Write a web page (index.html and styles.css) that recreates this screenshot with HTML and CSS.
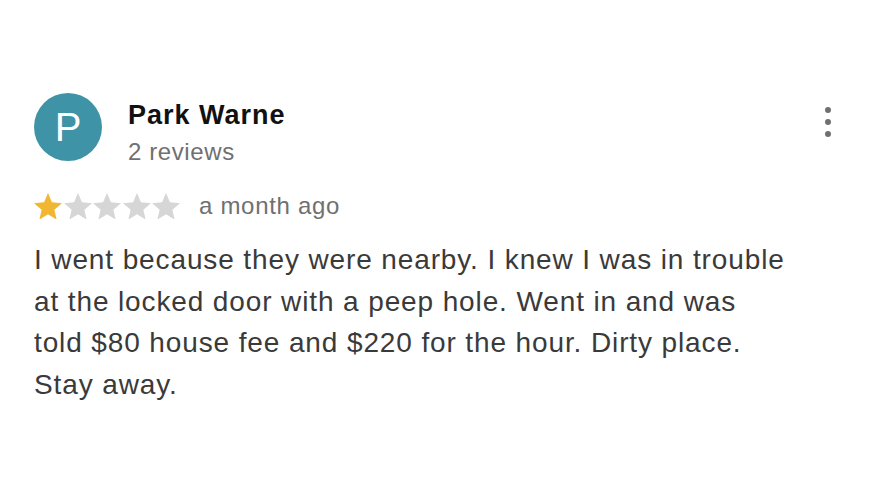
FILE: index.html
```html
<!DOCTYPE html>
<html>
<head>
<meta charset="utf-8">
<link rel="stylesheet" href="styles.css">
</head>
<body>
<div class="review">
  <div class="header">
    <div class="avatar">P</div>
    <div class="who">
      <div class="name">Park Warne</div>
      <div class="count">2 reviews</div>
    </div>
    <div class="menu" aria-label="More options">
      <span class="dot"></span><span class="dot"></span><span class="dot"></span>
    </div>
  </div>
  <div class="meta">
    <div class="stars">
      <svg class="star on" viewBox="2 2 20 19"><path d="M12 17.27L18.18 21l-1.64-7.03L22 9.24l-7.19-.61L12 2 9.19 8.63 2 9.24l5.46 4.73L5.82 21z"/></svg>
      <svg class="star" viewBox="2 2 20 19"><path d="M12 17.27L18.18 21l-1.64-7.03L22 9.24l-7.19-.61L12 2 9.19 8.63 2 9.24l5.46 4.73L5.82 21z"/></svg>
      <svg class="star" viewBox="2 2 20 19"><path d="M12 17.27L18.18 21l-1.64-7.03L22 9.24l-7.19-.61L12 2 9.19 8.63 2 9.24l5.46 4.73L5.82 21z"/></svg>
      <svg class="star" viewBox="2 2 20 19"><path d="M12 17.27L18.18 21l-1.64-7.03L22 9.24l-7.19-.61L12 2 9.19 8.63 2 9.24l5.46 4.73L5.82 21z"/></svg>
      <svg class="star" viewBox="2 2 20 19"><path d="M12 17.27L18.18 21l-1.64-7.03L22 9.24l-7.19-.61L12 2 9.19 8.63 2 9.24l5.46 4.73L5.82 21z"/></svg>
    </div>
    <span class="when">a month ago</span>
  </div>
  <p class="text">I went because they were nearby. I knew I was in trouble at the locked door with a peep hole. Went in and was told $80 house fee and $220 for the hour. Dirty place. Stay away.</p>
</div>
</body>
</html>
```
FILE: styles.css
```css
html, body {
  margin: 0;
  padding: 0;
  background: #ffffff;
}
body {
  font-family: "Liberation Sans", Arial, sans-serif;
  width: 880px;
  height: 493px;
  overflow: hidden;
}
.review {
  padding: 93px 0 0 34px;
}
.header {
  display: flex;
  align-items: flex-start;
}
.avatar {
  width: 68px;
  height: 68px;
  border-radius: 50%;
  background: #3f93a6;
  color: #ffffff;
  font-size: 40px;
  font-weight: 300;
  display: flex;
  align-items: center;
  justify-content: center;
  flex: none;
}
.who {
  margin-left: 26px;
  padding-top: 7px;
  flex: 1;
}
.name {
  font-size: 27px;
  font-weight: 600;
  letter-spacing: 1px;
  color: #111111;
  line-height: 30px;
}
.count {
  font-size: 24px;
  letter-spacing: 0.6px;
  color: #707070;
  line-height: 30px;
  margin-top: 7px;
}
.menu {
  width: 12px;
  margin-right: 46px;
  margin-top: 14px;
  display: flex;
  flex-direction: column;
  align-items: center;
  gap: 6px;
}
.dot {
  width: 6px;
  height: 6px;
  border-radius: 50%;
  background: #707070;
}
.meta {
  display: flex;
  align-items: center;
  margin-top: 24px;
  height: 30px;
}
.stars {
  display: flex;
  gap: 1.5px;
}
.star {
  width: 28px;
  height: 26.6px;
  fill: #d6d6d6;
}
.star.on {
  fill: #f1b632;
}
.when {
  margin-left: 19px;
  font-size: 24px;
  letter-spacing: 0.7px;
  color: #707070;
}
.text {
  margin: 18px 0 0 0;
  width: 754px;
  font-size: 28px;
  letter-spacing: 0.88px;
  line-height: 41.7px;
  color: #3a3a3a;
}
```
